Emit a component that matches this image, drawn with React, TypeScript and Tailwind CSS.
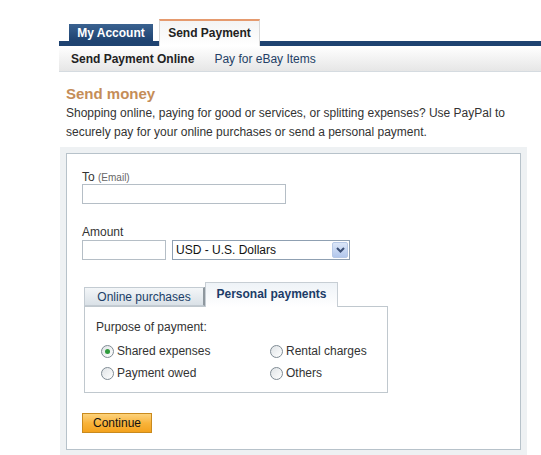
import React from 'react'

function Radio({ checked }: { checked?: boolean }) {
  return (
    <span className="flex h-[13px] w-[13px] items-center justify-center rounded-full border border-[#7f8b94] bg-gradient-to-br from-[#dfe3e6] to-white">
      {checked && <span className="h-[5px] w-[5px] rounded-full bg-[#2f9b3c]" />}
    </span>
  )
}

export default function App() {
  return (
    <div className="min-h-[455px] bg-white font-['Liberation_Sans',Arial,sans-serif] text-[12px] text-[#333]">
      <div className="pl-[59px] pt-[19px]">
        {/* top tabs */}
        <div className="flex h-[27px] items-end border-b-[5px] border-[#1e4270] pl-[10px]">
          <div className="flex h-[17px] w-[84px] items-center justify-center bg-gradient-to-b from-[#3a6290] to-[#1e4270] text-[12px] font-bold text-white">
            My Account
          </div>
          <div className="relative -mb-[5px] ml-[6px] flex h-[27px] w-[101px] items-center justify-center border-x border-t-2 border-x-[#d8d8d8] border-t-[#e59a6e] bg-gradient-to-b from-[#f4f4f4] to-white pb-[2px] text-[12px] font-bold text-[#222]">
            Send Payment
          </div>
        </div>
        {/* sub nav */}
        <div className="flex h-[26px] items-center gap-[20px] border-b border-[#d5dbe0] bg-gradient-to-b from-white to-[#e6e6e6] pl-[12px] text-[12px]">
          <span className="font-bold text-[#222]">Send Payment Online</span>
          <span className="text-[#243f66]">Pay for eBay Items</span>
        </div>
      </div>

      <div className="pl-[66px] pr-[14px]">
        <h1 className="mt-[13px] text-[15px] font-bold leading-[18px] text-[#c58d58]">Send money</h1>
        <p className="mt-[1px] text-[12px] leading-[19px] text-[#333]">
          Shopping online, paying for good or services, or splitting expenses? Use PayPal to securely pay for your online purchases or send a personal payment.
        </p>
      </div>

      <div className="ml-[60px] mr-[14px] mt-[5px] bg-[#eef1f3] px-[6px] pb-[5px] pt-[6px]">
        <div className="border border-[#b7c2ca] bg-white pb-[16px] pl-[15px] pt-[16px]">
          <div className="flex h-[14px] items-baseline leading-[14px]">
            <span className="text-[12px] text-[#333]">To&nbsp;</span>
            <span className="text-[10px] text-[#666]">(Email)</span>
          </div>
          <div className="h-[20px] w-[204px] border border-[#b5bec6] bg-white" />

          <div className="mt-[21px] h-[14px] leading-[14px] text-[#333]">Amount</div>
          <div className="mt-[1px] flex gap-[6px]">
            <div className="h-[20px] w-[84px] border border-[#b5bec6] bg-white" />
            <div className="flex h-[20px] w-[178px] items-center justify-between border border-[#8fa0b2] bg-white pl-[3px] pr-[1px]">
              <span className="text-[12px] text-[#111]">USD - U.S. Dollars</span>
              <span className="flex h-[16px] w-[16px] items-center justify-center rounded-[2px] border border-[#b6c8e6] bg-gradient-to-b from-[#dbe6f8] to-[#b2c7ec]">
                <svg width="9" height="6" viewBox="0 0 9 6">
                  <path d="M1 1 L4.5 4.5 L8 1" fill="none" stroke="#3b4f75" strokeWidth="2" />
                </svg>
              </span>
            </div>
          </div>

          {/* inner tabs */}
          <div className="mt-[22px] pl-[2px]">
            <div className="flex items-end">
              <div className="flex h-[19px] w-[121px] items-center justify-center border-y border-l border-r-2 border-[#c3cbd2] border-r-[#8e979e] bg-gradient-to-b from-[#f3f6f8] to-[#dae1e7] text-[12px] text-[#203e68]">
                Online purchases
              </div>
              <div className="relative -mb-px flex h-[25px] w-[133px] items-center justify-center border-x border-t border-[#c7ced4] bg-gradient-to-b from-[#eef3f7] to-white pb-[3px] text-[12px] font-bold text-[#1c3c68]">
                Personal payments
              </div>
            </div>
            <div className="h-[87px] w-[304px] border border-[#c0c8ce] pl-[11px] pt-[13px]">
              <div className="leading-[14px] text-[#333]">Purpose of payment:</div>
              <div className="mt-[10px] grid grid-cols-[169px_1fr] gap-y-[8px] pl-[5px] text-[12px] leading-[14px] text-[#333]">
                <label className="flex items-center gap-[3px]">
                  <Radio checked />
                  Shared expenses
                </label>
                <label className="flex items-center gap-[3px]">
                  <Radio />
                  Rental charges
                </label>
                <label className="flex items-center gap-[3px]">
                  <Radio />
                  Payment owed
                </label>
                <label className="flex items-center gap-[3px]">
                  <Radio />
                  Others
                </label>
              </div>
            </div>
          </div>

          <button className="mt-[20px] flex h-[20px] w-[70px] items-center justify-center border border-[#c98a1e] bg-gradient-to-b from-[#fcd27a] via-[#f9b43a] to-[#f3a21c] text-[12px] text-[#111]">
            Continue
          </button>
        </div>
      </div>
    </div>
  )
}
